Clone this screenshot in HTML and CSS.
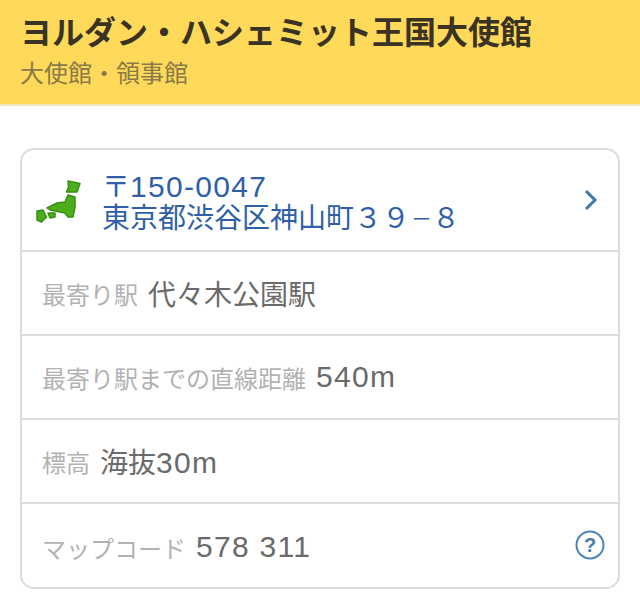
FILE: index.html
```html
<!DOCTYPE html>
<html lang="ja">
<head>
    <meta charset="UTF-8">
    <meta name="viewport" content="width=device-width, initial-scale=1.0">
    <title>ヨルダン・ハシェミット王国大使館</title>
    <link rel="stylesheet" href="styles.css">
</head>
<body>
    <header class="header">
        <h1 class="title">ヨルダン・ハシェミット王国大使館</h1>
        <p class="category">大使館・領事館</p>
    </header>
    <main class="content">
        <section class="card">
            <a class="row address">
                <svg class="map-icon" width="50" height="48" viewBox="34 176 50 48">
                    <g fill="#4cae1c" stroke="#379012" stroke-width="1.500" stroke-linejoin="round">
                        <path d="M68 181l12 2.500 -3 8.500 -10.500 0 2 -5z"/>
                        <path d="M68 195l7 2 0 10 -2 10 -5 0 -3 -4 -15 -3 -3 -2 10 -5 8 -1z"/>
                        <path d="M37 211l6 -1 3.500 7 -5 5 -4.500 -2z"/>
                        <path d="M48 213l7 0 0 4 -5 1z"/>
                    </g>
                </svg>
                <span class="address-text">〒<span class="num">150-0047</span><br>東京都渋谷区神山町３９<span class="dash">－</span>８</span>
                <svg class="chevron" width="14" height="22" viewBox="0 0 14 22">
                    <path d="M2 2l9 9 -9 9" fill="none" stroke="#3f78ad" stroke-width="3"/>
                </svg>
            </a>
            <div class="row">
                <span class="label">最寄り駅</span>
                <span class="value">代々木公園駅</span>
            </div>
            <div class="row">
                <span class="label">最寄り駅までの直線距離</span>
                <span class="value"><span class="num">540m</span></span>
            </div>
            <div class="row">
                <span class="label">標高</span>
                <span class="value">海抜<span class="num">30m</span></span>
            </div>
            <div class="row last">
                <span class="label">マップコード</span>
                <span class="value"><span class="num">578 311</span></span>
                <svg class="help" width="30" height="30" viewBox="0 0 30 30">
                    <circle cx="15" cy="15" r="13.500" fill="none" stroke="#4a85b5" stroke-width="2"/>
                    <text x="15" y="22" text-anchor="middle" class="help-mark">?</text>
                </svg>
            </div>
        </section>
    </main>
</body>
</html>
```

FILE: styles.css
```css
* {
    box-sizing: border-box;
    margin: 0;
    padding: 0;
}
html, body {
    background-color: #fff;
    height: 100%;
    overflow: hidden;
}
body {
    font-family: "Liberation Sans", "Noto Sans CJK JP", sans-serif;
}
.header {
    background-color: #ffd95a;
    border-bottom: 2px solid #f0e6c0;
    height: 106px;
    padding: 13px 20px 0;
}
.title {
    color: #3a3324;
    font-size: 32px;
    font-weight: bold;
    line-height: 41px;
}
.category {
    color: #8a7a48;
    font-size: 24px;
    line-height: 36px;
    margin-top: 2px;
}
.content {
    padding: 42px 20px 0;
}
.card {
    border: 2px solid #dcdcdc;
    border-radius: 14px;
    height: 441px;
}
.row {
    align-items: center;
    border-top: 2px solid #dcdcdc;
    display: flex;
    height: 84px;
    padding: 0 13px 0 20px;
}
.last {
    padding-top: 4px;
}
.address {
    border-top: 0;
    height: 100px;
    padding-left: 12px;
}
.map-icon {
    flex: none;
    margin-right: 18px;
}
.address-text {
    color: #2f5fa8;
    flex: 1;
    font-size: 28px;
    line-height: 31px;
    padding-top: 5px;
}
.dash {
    font-size: 21px;
    margin-left: 1px;
    vertical-align: 2px;
}
.num {
    font-size: 30px;
    letter-spacing: 1.3px;
}
.chevron {
    margin-right: 7px;
}
.label {
    color: #b2b2b2;
    font-size: 24px;
    margin-right: 10px;
}
.value {
    color: #6a6a6a;
    flex: 1;
    font-size: 28px;
}
.help {
    margin-top: -4px;
}
.help-mark {
    fill: #4a7ba8;
    font-size: 20px;
    font-weight: bold;
}
```
